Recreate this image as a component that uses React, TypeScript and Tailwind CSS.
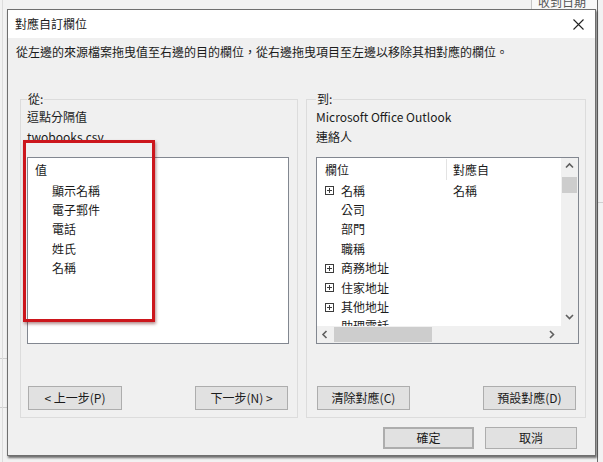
import React from 'react';

const leftItems = ['顯示名稱', '電子郵件', '電話', '姓氏', '名稱'];

const rightRows: { label: string; expandable?: boolean; mapped?: string }[] = [
  { label: '名稱', expandable: true, mapped: '名稱' },
  { label: '公司' },
  { label: '部門' },
  { label: '職稱' },
  { label: '商務地址', expandable: true },
  { label: '住家地址', expandable: true },
  { label: '其他地址', expandable: true },
  { label: '助理電話' },
  { label: '商務電話' },
];

const chevronPaths = {
  up: 'M1 5.5 L4.5 2 L8 5.5',
  down: 'M1 2 L4.5 5.5 L8 2',
  left: 'M5.5 1 L2 4.5 L5.5 8',
  right: 'M2 1 L5.5 4.5 L2 8',
};

const Chevron = ({ dir }: { dir: keyof typeof chevronPaths }) => (
  <svg width="9" height="9" viewBox="0 0 9 9">
    <path d={chevronPaths[dir]} fill="none" stroke="#5f5f5f" strokeWidth="1.6" />
  </svg>
);

const PlusBox = () => (
  <svg width="9" height="9" viewBox="0 0 9 9" className="shrink-0">
    <rect x="0.5" y="0.5" width="8" height="8" fill="white" stroke="#3c3c3c" />
    <path d="M2 4.5 H7 M4.5 2 V7" stroke="#3c3c3c" />
  </svg>
);

const WinButton = ({ children, className = '' }: { children: React.ReactNode; className?: string }) => (
  <button
    className={`flex items-center justify-center border border-[#adadad] bg-[#e1e1e1] text-[12px] leading-none text-[#1b1b1b] ${className}`}
  >
    {children}
  </button>
);

export default function App() {
  return (
    <div className="relative w-[603px] h-[462px] overflow-hidden bg-[#f2f2f2] font-['Noto_Sans_CJK_TC','Noto_Sans',sans-serif] text-[#1b1b1b]">
      {/* window behind the dialog */}
      <div className="absolute left-[531px] top-0 h-[9px] w-[66px] overflow-hidden border-l border-[#c6c6c6] bg-[#f8f8f8]">
        <div className="-mt-[4px] pl-[6px] text-[12px] leading-[12px] text-[#555]">收到日期</div>
      </div>
      <div className="absolute left-[597px] top-0 h-[462px] w-px bg-[#6a6a6a]" />
      <div className="absolute left-[598px] top-[202px] h-px w-[5px] bg-[#cfcfcf]" />
      <div className="absolute left-0 top-[358px] h-px w-[7px] bg-[#cfcfcf]" />
      <div className="absolute left-0 top-[407px] h-px w-[7px] bg-[#cfcfcf]" />
      <div className="absolute left-[2px] top-0 h-[462px] w-px bg-[#dcdcdc]" />

      {/* dialog window */}
      <div className="absolute left-[7px] top-[9px] flex h-[447px] w-[589px] flex-col border border-[#6f6f6f] bg-[#f0f0f0] shadow-[1px_2px_2px_rgba(0,0,0,0.55)]">
        <div className="flex h-[28px] shrink-0 items-center justify-between bg-white pl-[7px] pr-[11px]">
          <span className="text-[12px] leading-[16px]">對應自訂欄位</span>
          <svg width="11" height="11" viewBox="0 0 11 11">
            <path d="M0.5 0.5 L10.5 10.5 M10.5 0.5 L0.5 10.5" stroke="#222" strokeWidth="1.1" />
          </svg>
        </div>

        <div className="flex flex-1 flex-col pl-[12px] pr-[9px] pt-[6px]">
          <p className="-ml-[4px] text-[12px] leading-[16px]">
            從左邊的來源檔案拖曳值至右邊的目的欄位，從右邊拖曳項目至左邊以移除其相對應的欄位。
          </p>

          <div className="mt-[31px] flex gap-[8px]">
            {/* source */}
            <fieldset className="flex w-[278px] flex-col border border-[#dcdcdc] pl-[6px] pr-[8px] pb-[7px]">
              <legend className="px-[1px] text-[12px] leading-[16px]">從:</legend>
              <div className="text-[12px] leading-[20px]">逗點分隔值</div>
              <div className="text-[12px] leading-[20px]">twobooks.csv</div>
              <div className="mt-[10px] h-[187px] border border-[#828790] bg-white">
                <div className="flex h-[23px] items-center pl-[7px] text-[12px]">值</div>
                {leftItems.map(item => (
                  <div key={item} className="flex h-[19.4px] items-center pl-[24px] text-[12px]">
                    {item}
                  </div>
                ))}
              </div>
              <div className="mt-[42px] flex justify-between pl-[1px] pr-[1px]">
                <WinButton className="h-[24px] w-[94px]">&lt; 上一步(P)</WinButton>
                <WinButton className="h-[24px] w-[93px]">下一步(N) &gt;</WinButton>
              </div>
            </fieldset>

            {/* destination */}
            <fieldset className="flex w-[280px] flex-col border border-[#dcdcdc] pl-[9px] pr-[6px] pb-[7px]">
              <legend className="px-[1px] text-[12px] leading-[16px]">到:</legend>
              <div className="text-[12px] leading-[20px]">Microsoft Office Outlook</div>
              <div className="text-[12px] leading-[20px]">連絡人</div>
              <div className="mt-[10px] flex h-[187px] flex-col border border-[#828790] bg-white">
                <div className="flex h-[168px]">
                  <div className="flex-1 overflow-hidden">
                    <div className="flex h-[23px] items-center text-[12px]">
                      <div className="w-[129px] pl-[8px]">欄位</div>
                      <div className="h-[21px] w-px bg-[#e3e3e3]" />
                      <div className="pl-[6px]">對應自</div>
                    </div>
                    {rightRows.map(row => (
                      <div key={row.label} className="flex h-[19.4px] items-center text-[12px]">
                        <div className="flex w-[130px] items-center gap-[7px] pl-[8px]">
                          {row.expandable ? <PlusBox /> : <span className="w-[9px]" />}
                          <span>{row.label}</span>
                        </div>
                        <div className="pl-[6px]">{row.mapped}</div>
                      </div>
                    ))}
                  </div>
                  <div className="flex w-[17px] flex-col bg-[#f0f0f0]">
                    <div className="flex h-[17px] items-center justify-center">
                      <Chevron dir="up" />
                    </div>
                    <div className="mx-[1px] mt-[2px] h-[16px] bg-[#cdcdcd]" />
                    <div className="flex-1" />
                    <div className="flex h-[17px] items-center justify-center">
                      <Chevron dir="down" />
                    </div>
                  </div>
                </div>
                <div className="flex h-[17px] bg-[#f0f0f0]">
                  <div className="flex w-[17px] items-center justify-center">
                    <Chevron dir="left" />
                  </div>
                  <div className="my-[1px] w-[98px] bg-[#cdcdcd]" />
                  <div className="flex-1" />
                  <div className="flex w-[17px] items-center justify-center">
                    <Chevron dir="right" />
                  </div>
                  <div className="w-[17px]" />
                </div>
              </div>
              <div className="mt-[42px] flex justify-between pl-[1px] pr-[3px]">
                <WinButton className="h-[24px] w-[93px]">清除對應(C)</WinButton>
                <WinButton className="h-[24px] w-[93px]">預設對應(D)</WinButton>
              </div>
            </fieldset>
          </div>

          <div className="mt-[9px] flex justify-end gap-[11px] pr-[9px]">
            <WinButton className="h-[22px] w-[91px] border-2 border-[#0078d7]">確定</WinButton>
            <WinButton className="h-[22px] w-[92px]">取消</WinButton>
          </div>
        </div>
      </div>

      {/* red annotation box */}
      <div className="absolute left-[23px] top-[140px] h-[182px] w-[132px] border-[3px] border-[#cc161c] shadow-[1px_2px_3px_rgba(90,0,0,0.45)]" />
    </div>
  );
}
